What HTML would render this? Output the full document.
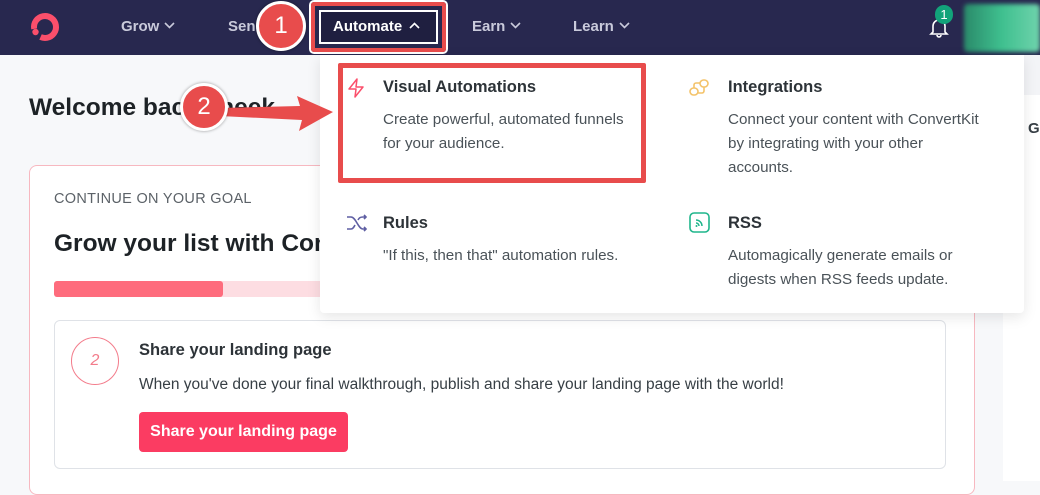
<!DOCTYPE html>
<html><head><style>
*{box-sizing:border-box;margin:0;padding:0}
body{width:1040px;height:481px;overflow:hidden;background:#f7f8fa;font-family:"Liberation Sans",sans-serif;position:relative;color:#373f45}
.nav{position:absolute;left:0;top:0;width:1040px;height:55px;background:#28284f}
.ni{position:absolute;top:18px;color:#c9cadb;font-size:15px;font-weight:bold}
.ni svg{margin-left:5px;vertical-align:2px}
.abs{position:absolute}
.card{position:absolute;left:29px;top:165px;width:946px;height:330px;background:#fff;border:1px solid #f7b8c0;border-radius:8px}
.drop{position:absolute;left:320px;top:55px;width:704px;height:258px;background:#fff;box-shadow:0 4px 14px rgba(0,0,0,.1);border-radius:0 0 4px 4px}
.t{position:absolute;font-size:16.5px;font-weight:bold;color:#2d3338}
.d{position:absolute;font-size:15.2px;line-height:24px;color:#4a5258;white-space:nowrap}
.circ{position:absolute;border-radius:50%;background:#e84c4c;border:3px solid #fff;color:#fff;font-size:24px;text-align:center;box-shadow:0 0 3px rgba(0,0,0,.4)}
</style></head><body>
<div class="nav">
<svg class="abs" style="left:29px;top:11px" width="34" height="34" viewBox="0 0 34 34"><circle cx="16" cy="16" r="11" fill="none" stroke="#fb4f6b" stroke-width="6" stroke-dasharray="58 11" transform="rotate(170 16 16)"/><circle cx="6.5" cy="21" r="3.2" fill="#fb4f6b"/></svg>
<div class="ni" style="left:121px">Grow<svg width="11" height="7" viewBox="0 0 11 7"><path d="M1 1l4.5 4.5L10 1" fill="none" stroke="#c9cadb" stroke-width="1.6"/></svg></div>
<div class="ni" style="left:228px">Sen</div>
<div class="ni" style="left:472px">Earn<svg width="11" height="7" viewBox="0 0 11 7"><path d="M1 1l4.5 4.5L10 1" fill="none" stroke="#c9cadb" stroke-width="1.6"/></svg></div>
<div class="ni" style="left:573px">Learn<svg width="11" height="7" viewBox="0 0 11 7"><path d="M1 1l4.5 4.5L10 1" fill="none" stroke="#c9cadb" stroke-width="1.6"/></svg></div>
<svg class="abs" style="left:928px;top:16px" width="22" height="22" viewBox="0 0 22 22"><path d="M5 16V10a6 6 0 0 1 12 0v6l2 2H3z M9 19a2 2 0 0 0 4 0" fill="none" stroke="#fff" stroke-width="1.6"/></svg>
<div class="abs" style="left:935px;top:5px;width:18px;height:19px;border-radius:9px;background:#12a37a;color:#fff;font-size:13px;text-align:center;line-height:19px">1</div>
<div class="abs" style="left:964px;top:4px;width:76px;height:48px;background:linear-gradient(90deg,#2a8a6a,#3fc08f,#6fd3ac);border-radius:4px;filter:blur(2px)"></div>
</div>
<div class="abs" style="left:311px;top:2px;width:135px;height:50px;border:4px solid #e84c4c;border-radius:3px;box-shadow:0 0 0 2px #fff"></div>
<div class="abs" style="left:319px;top:10px;width:119px;height:34px;border:2px solid #fff;background:#1f1f40;color:#fff;font-size:15px;font-weight:bold;padding:6px 12px">Automate<svg style="margin-left:7px;vertical-align:2px" width="11" height="7" viewBox="0 0 11 7"><path d="M1 6l4.5-4.5L10 6" fill="none" stroke="#fff" stroke-width="1.6"/></svg></div>
<div class="circ" style="left:256px;top:1px;width:50px;height:50px;line-height:44px">1</div>
<div class="abs" style="left:29px;top:94px;font-size:24.5px;font-weight:bold;color:#1d2226">Welcome back, meek</div>
<div class="abs" style="left:1003px;top:55px;width:37px;height:426px;background:#fff"></div>
<div class="abs" style="left:1003px;top:55px;width:37px;height:40px;background:#f3f4f7"></div>
<div class="abs" style="left:1028px;top:120px;font-weight:bold;font-size:15px">G</div>
<div class="card">
<div class="abs" style="left:24px;top:25px;font-size:14.5px;color:#5c6268;letter-spacing:.3px">CONTINUE ON YOUR GOAL</div>
<div class="abs" style="left:24px;top:64px;font-size:24.5px;font-weight:bold;color:#1d2226">Grow your list with ConvertKit</div>
<div class="abs" style="left:24px;top:115px;width:880px;height:16px;background:#fddde2;border-radius:3px"></div>
<div class="abs" style="left:24px;top:115px;width:169px;height:16px;background:#fe6c7d;border-radius:3px"></div>
<div class="abs" style="left:24px;top:154px;width:892px;height:149px;border:1px solid #dfe2e7;border-radius:6px">
<div class="abs" style="left:16px;top:16px;width:48px;height:48px;border:1.5px solid #f37c8b;border-radius:50%;color:#f37c8b;text-align:center;line-height:46px;font-style:italic;font-size:16px">2</div>
<div class="abs" style="left:84px;top:20px;font-size:16.5px;font-weight:bold;color:#2d3338">Share your landing page</div>
<div class="abs" style="left:84px;top:55px;font-size:15.5px;color:#373f45;white-space:nowrap">When you've done your final walkthrough, publish and share your landing page with the world!</div>
<div class="abs" style="left:84px;top:91px;width:209px;height:40px;background:#fb3c62;border-radius:4px;color:#fff;font-size:16px;font-weight:bold;text-align:center;line-height:40px">Share your landing page</div>
</div>
</div>
<div class="drop">
<svg class="abs" style="left:27px;top:23px" width="18" height="20" viewBox="0 0 18 20"><path d="M10 1L2 11h7l-1 8 8-10H9z" fill="none" stroke="#fb4f6b" stroke-width="1.5" stroke-linejoin="round"/></svg>
<div class="t" style="left:63px;top:23px">Visual Automations</div>
<div class="d" style="left:63px;top:53px">Create powerful, automated funnels<br>for your audience.</div>
<svg class="abs" style="left:368px;top:23px" width="22" height="20" viewBox="0 0 22 20"><g fill="none" stroke="#f4c36a" stroke-width="1.6"><rect x="2" y="10" width="8" height="7" rx="3.5"/><rect x="12" y="2" width="8" height="7" rx="3.5"/><path d="M2 13.5h-0M6 10V7a2 2 0 0 1 2-2h4M16 9v4a2 2 0 0 1-2 2h-4"/></g></svg>
<div class="t" style="left:408px;top:23px">Integrations</div>
<div class="d" style="left:408px;top:53px">Connect your content with ConvertKit<br>by integrating with your other<br>accounts.</div>
<svg class="abs" style="left:26px;top:159px" width="22" height="18" viewBox="0 0 22 18"><g fill="none" stroke="#5f5fa3" stroke-width="1.6"><path d="M1 3h4c5 0 7 12 12 12h3M1 15h4c2 0 3-2 4-4M12 6c1-2 2-3 5-3h3M18 1l2 2-2 2M18 13l2 2-2 2"/></g></svg>
<div class="t" style="left:63px;top:159px">Rules</div>
<div class="d" style="left:63px;top:189px">"If this, then that" automation rules.</div>
<svg class="abs" style="left:369px;top:157px" width="21" height="21" viewBox="0 0 21 21"><rect x="1" y="1" width="19" height="19" rx="4" fill="none" stroke="#1fb58b" stroke-width="1.6"/><path d="M7 8a6 6 0 0 1 6 6M7 11a3 3 0 0 1 3 3" fill="none" stroke="#1fb58b" stroke-width="1.5"/><circle cx="7.5" cy="14" r="1" fill="#1fb58b"/></svg>
<div class="t" style="left:408px;top:159px">RSS</div>
<div class="d" style="left:408px;top:189px">Automagically generate emails or<br>digests when RSS feeds update.</div>
</div>
<div class="abs" style="left:338px;top:63px;width:308px;height:120px;border:5px solid #e84c4c;border-radius:2px"></div>
<svg class="abs" style="left:200px;top:90px" width="140" height="45" viewBox="0 0 140 45"><path d="M20 18 L100 16 L97 6 L133 22 L99 41 L102 30 L20 26z" fill="#e84c4c"/></svg>
<div class="circ" style="left:180px;top:83px;width:48px;height:48px;line-height:42px">2</div>
</body></html>
